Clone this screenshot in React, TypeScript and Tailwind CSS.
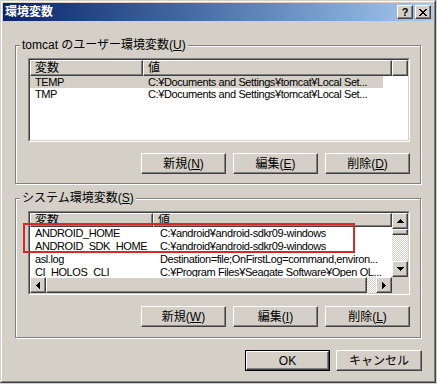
import React from 'react';

// Windows classic bevels
const raised =
  'border border-t-white border-l-white border-r-[#404040] border-b-[#404040] shadow-[inset_-1px_-1px_0_#808080] bg-[#d4d0c8]';
const track =
  'bg-[repeating-conic-gradient(#ffffff_0%_25%,#d4d0c8_0%_50%)] bg-[length:2px_2px]';
// latin list text is narrow in the original (MS UI Gothic)
const listText = "text-[11px] tracking-[-0.4px] font-[family-name:'Liberation_Sans','Noto_Sans_CJK_JP',sans-serif]";

type Dir = 'up' | 'down' | 'left' | 'right';

// pixel arrow: 1,3,5,7 pixel steps
const Arrow = ({ dir }: { dir: Dir }) => {
  const steps = [0, 1, 2, 3];
  if (dir === 'up' || dir === 'down') {
    return (
      <svg width="7" height="4" shapeRendering="crispEdges">
        {steps.map((i) => (
          <rect key={i} x={3 - i} y={dir === 'up' ? i : 3 - i} width={i * 2 + 1} height="1" fill="#000" />
        ))}
      </svg>
    );
  }
  return (
    <svg width="4" height="7" shapeRendering="crispEdges">
      {steps.map((i) => (
        <rect key={i} x={dir === 'left' ? i : 3 - i} y={3 - i} width="1" height={i * 2 + 1} fill="#000" />
      ))}
    </svg>
  );
};

const ScrollBtn = ({ dir }: { dir: Dir }) => (
  <div className={`${raised} w-[16px] h-[16px] shrink-0 flex items-center justify-center`}>
    <Arrow dir={dir} />
  </div>
);

const Btn = ({ label, hot }: { label: string; hot: string }) => (
  <div className={`${raised} w-[85px] h-[21px] flex items-center justify-center leading-[14px]`}>
    {label}(<span className="underline">{hot}</span>)
  </div>
);

const HeaderCell = ({ w, children }: { w: string; children?: React.ReactNode }) => (
  <div className={`${raised} ${w} h-full pl-[4px] flex items-center leading-[12px] overflow-hidden`}>{children}</div>
);

// sunken listview frame
const Sunken = ({ children }: { children: React.ReactNode }) => (
  <div className="w-[382px] h-[84px] border border-t-[#808080] border-l-[#808080] border-r-white border-b-white">
    <div className="w-full h-full border border-t-[#404040] border-l-[#404040] border-r-[#d4d0c8] border-b-[#d4d0c8] bg-white overflow-hidden">
      {children}
    </div>
  </div>
);

const GroupLabel = ({ children }: { children: React.ReactNode }) => (
  <div className="-mt-[8px] ml-[4px] px-[2px] w-fit bg-[#d4d0c8] leading-[14px]">{children}</div>
);

const userVars = [
  { name: 'TEMP', value: 'C:¥Documents and Settings¥tomcat¥Local Set...', selected: true },
  { name: 'TMP', value: 'C:¥Documents and Settings¥tomcat¥Local Set...' },
];

const sysVars = [
  { name: 'ANDROID_HOME', value: 'C:¥android¥android-sdkr09-windows' },
  { name: 'ANDROID_SDK_HOME', value: 'C:¥android¥android-sdkr09-windows' },
  { name: 'asl.log', value: 'Destination=file;OnFirstLog=command,environ...' },
  { name: 'CI_HOLOS_CLI', value: 'C:¥Program Files¥Seagate Software¥Open OL...' },
];

export default function App() {
  return (
    <div className="w-[437px] h-[384px] bg-[#d4d0c8] text-[12px] text-black font-[family-name:'Liberation_Sans','Noto_Sans_CJK_JP',sans-serif]">
      <div className="w-[436px] h-[383px] border border-t-[#d4d0c8] border-l-[#d4d0c8] border-r-[#404040] border-b-[#404040]">
        <div className="h-full border border-t-white border-l-white border-r-[#808080] border-b-[#808080] p-[1px] flex flex-col">
          {/* title bar */}
          <div className="h-[18px] shrink-0 flex items-center justify-between pl-[2px] pr-[2px] bg-gradient-to-r from-[#0a246a] to-[#a6caf0]">
            <span className="text-white font-bold leading-[14px]">環境変数</span>
            <div className="flex gap-[2px]">
              <div className={`${raised} w-[16px] h-[14px] flex items-center justify-center font-bold text-[11px] leading-[10px]`}>
                ?
              </div>
              <div className={`${raised} w-[16px] h-[14px] flex items-center justify-center`}>
                <svg width="8" height="7" shapeRendering="crispEdges">
                  <path d="M0 0h2l2 2.5 2-2.5h2l-3 3.5 3 3.5h-2l-2-2.5-2 2.5h-2l3-3.5z" fill="#000" />
                </svg>
              </div>
            </div>
          </div>

          {/* user variables */}
          <div className="mt-[24px] ml-[12px] w-[406px] h-[139px] shrink-0 border border-[#808080] shadow-[inset_1px_1px_0_#fff,1px_1px_0_#fff]">
            <GroupLabel>
              tomcat のユーザー環境変数(<span className="underline">U</span>)
            </GroupLabel>
            <div className="mt-[6px] ml-[12px]">
              <Sunken>
                <div className="h-[16px] flex">
                  <HeaderCell w="w-[113px]">変数</HeaderCell>
                  <HeaderCell w="w-[249px]">値</HeaderCell>
                  <HeaderCell w="flex-1" />
                </div>
                {userVars.map((v) => (
                  <div key={v.name} className={`h-[12px] leading-[12px] flex whitespace-nowrap ${listText}`}>
                    <div className={`flex w-[353px] ${v.selected ? 'bg-[#d4d0c8]' : ''}`}>
                      <div className="w-[113px] pl-[5px]">{v.name}</div>
                      <div className="flex-1 pl-[5px] overflow-hidden">{v.value}</div>
                    </div>
                  </div>
                ))}
              </Sunken>
            </div>
            <div className="mt-[11px] ml-[12px] w-[382px] flex justify-end gap-[7px]">
              <Btn label="新規" hot="N" />
              <Btn label="編集" hot="E" />
              <Btn label="削除" hot="D" />
            </div>
          </div>

          {/* system variables */}
          <div className="relative mt-[14px] ml-[12px] w-[406px] h-[140px] shrink-0 border border-[#808080] shadow-[inset_1px_1px_0_#fff,1px_1px_0_#fff]">
            <GroupLabel>
              システム環境変数(<span className="underline">S</span>)
            </GroupLabel>
            <div className="mt-[6px] ml-[12px]">
              <Sunken>
                <div className="h-[64px] flex">
                  <div className="flex-1 overflow-hidden">
                    <div className="h-[14px] flex">
                      <HeaderCell w="w-[123px]">変数</HeaderCell>
                      <HeaderCell w="flex-1">値</HeaderCell>
                    </div>
                    {sysVars.map((v) => (
                      <div key={v.name} className={`h-[13px] leading-[13px] flex whitespace-nowrap ${listText}`}>
                        <div className="w-[123px] pl-[5px] overflow-hidden">{v.name}</div>
                        <div className="flex-1 pl-[7px] overflow-hidden">{v.value}</div>
                      </div>
                    ))}
                  </div>
                  <div className="w-[16px] flex flex-col">
                    <ScrollBtn dir="up" />
                    <div className={`${raised} h-[6px]`} />
                    <div className={`flex-1 ${track}`} />
                    <ScrollBtn dir="down" />
                  </div>
                </div>
                <div className="h-[16px] flex">
                  <ScrollBtn dir="left" />
                  <div className={`${raised} w-[321px] h-[16px]`} />
                  <div className={`flex-1 ${track}`} />
                  <ScrollBtn dir="right" />
                  <div className="w-[16px] bg-[#d4d0c8]" />
                </div>
              </Sunken>
            </div>
            <div className="mt-[11px] ml-[12px] w-[382px] flex justify-end gap-[7px]">
              <Btn label="新規" hot="W" />
              <Btn label="編集" hot="I" />
              <Btn label="削除" hot="L" />
            </div>
            {/* annotation box */}
            <div className="absolute left-[7px] top-[24px] w-[332px] h-[30px] border-2 border-[#d42a2a] pointer-events-none" />
          </div>

          {/* dialog buttons */}
          <div className="mt-[12px] flex justify-end gap-[6px] pr-[11px]">
            <div className="w-[85px] h-[21px] border border-black">
              <div className={`${raised} w-full h-full flex items-center justify-center leading-[14px]`}>OK</div>
            </div>
            <div className={`${raised} w-[86px] h-[21px] flex items-center justify-center leading-[14px]`}>キャンセル</div>
          </div>
        </div>
      </div>
    </div>
  );
}
